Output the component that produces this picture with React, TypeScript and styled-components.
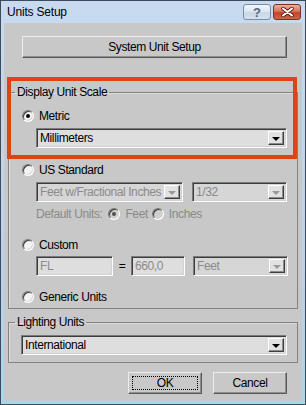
import React from "react";
import styled, { createGlobalStyle } from "styled-components";

const GlobalStyle = createGlobalStyle`
  body {
    margin: 0;
    background: #ffffff;
  }
`;

const uiFont = `"Liberation Sans", Arial, sans-serif`;

const Window = styled.div`
  width: 306px;
  height: 405px;
  box-sizing: border-box;
  border: 1px solid #3e4b5d;
  background: linear-gradient(to bottom, #c8daef 0%, #bcd1ea 60%, #a9d6e8 100%);
  padding: 0 3px 3px;
  display: flex;
  flex-direction: column;
  font-family: ${uiFont};
  font-size: 12px;
  letter-spacing: -0.4px;
  line-height: 14px;
  color: #000;
`;

const TitleBar = styled.div`
  height: 22px;
  flex: none;
  display: flex;
  align-items: center;
  justify-content: space-between;
  padding: 0 1px 0 3px;
`;

const TitleText = styled.span`
  font-size: 12px;
  letter-spacing: -0.2px;
  color: #000;
`;

const TitleButtons = styled.div`
  display: flex;
  gap: 2px;
`;

const CaptionButton = styled.div<{ $close?: boolean }>`
  width: 28px;
  height: 16px;
  box-sizing: border-box;
  border-radius: 3px;
  border: 1px solid ${(p) => (p.$close ? "#7c3322" : "#7a8ca3")};
  background: ${(p) =>
    p.$close
      ? "linear-gradient(to bottom, #eab0a0 0%, #d8735a 45%, #c4432a 55%, #d1644a 100%)"
      : "linear-gradient(to bottom, #f2f6fb 0%, #dde7f2 45%, #c9d7e8 55%, #d4e0ee 100%)"};
  display: flex;
  align-items: center;
  justify-content: center;
  font-weight: bold;
  font-size: 13px;
  letter-spacing: 0;
  color: #53667f;
  line-height: 1;
`;

const Client = styled.div`
  flex: 1;
  background: #c8c8c8;
  padding: 0 4px;
  display: flex;
  flex-direction: column;
`;

const PushButton = styled.div<{ $w: number; $focus?: boolean }>`
  width: ${(p) => p.$w}px;
  height: 22px;
  box-sizing: border-box;
  background: #c8c8c8;
  border: 1px solid;
  border-color: #ececec #5a5a5a #5a5a5a #ececec;
  box-shadow: inset -1px -1px 0 #8e8e8e;
  display: flex;
  align-items: center;
  justify-content: center;
  outline: ${(p) => (p.$focus ? "1px dotted #000" : "none")};
  outline-offset: -5px;
`;

const SystemRow = styled.div`
  margin-top: 13px;
  padding-left: 14px;
`;

const GroupWrap = styled.div<{ $mt: number }>`
  position: relative;
  margin-top: ${(p) => p.$mt}px;
`;

const Group = styled.fieldset<{ $pb: number }>`
  margin: 0;
  min-width: 0;
  padding: 0 0 ${(p) => p.$pb}px 0;
  border: 1px solid #828282;
  box-shadow: inset 1px 1px 0 #dcdcdc;
`;

const Legend = styled.legend`
  margin-left: 6px;
  padding: 0 2px;
  line-height: 14px;
`;

const Highlight = styled.div`
  position: absolute;
  top: -8px;
  left: -1px;
  width: 290px;
  height: 82px;
  box-sizing: border-box;
  border: 4px solid #dc4414;
  pointer-events: none;
`;

const Row = styled.div<{ $mt: number; $indent: number }>`
  display: flex;
  align-items: center;
  margin-top: ${(p) => p.$mt}px;
  padding-left: ${(p) => p.$indent}px;
  min-height: 14px;
`;

const Radio = styled.span<{ $checked?: boolean; $disabled?: boolean }>`
  width: 12px;
  height: 12px;
  flex: none;
  box-sizing: border-box;
  border-radius: 50%;
  border: 1px solid;
  border-color: #7a7a7a #ffffff #ffffff #7a7a7a;
  box-shadow: inset 1px 1px 0 #3c3c3c, inset -1px -1px 0 #d6d6d6;
  background: ${(p) => (p.$disabled ? "#cfcfcf" : "#f4f4f4")};
  display: flex;
  align-items: center;
  justify-content: center;

  &::after {
    content: "";
    display: ${(p) => (p.$checked ? "block" : "none")};
    width: 4px;
    height: 4px;
    border-radius: 50%;
    background: ${(p) => (p.$disabled ? "#505050" : "#000")};
  }
`;

const Label = styled.span<{ $ml: number; $disabled?: boolean }>`
  margin-left: ${(p) => p.$ml}px;
  color: ${(p) => (p.$disabled ? "#8a8a8a" : "#000")};
  white-space: nowrap;
  display: flex;
  align-items: center;
`;

const Combo = styled.div<{ $w: number; $disabled?: boolean; $ml?: number }>`
  width: ${(p) => p.$w}px;
  height: 20px;
  flex: none;
  margin-left: ${(p) => p.$ml ?? 0}px;
  box-sizing: border-box;
  display: flex;
  align-items: center;
  border: 1px solid;
  border-color: #7a7a7a #ffffff #ffffff #7a7a7a;
  box-shadow: inset 1px 1px 0 #3c3c3c, inset -1px -1px 0 #d2d2d2;
  background: ${(p) => (p.$disabled ? "#d6d6d6" : "#dedede")};
  color: ${(p) => (p.$disabled ? "#8a8a8a" : "#000")};
  padding: 0 2px 0 3px;
  white-space: nowrap;
  overflow: hidden;
`;

const ComboText = styled.span`
  flex: 1;
  min-width: 0;
  overflow: hidden;
`;

const ArrowBox = styled.span<{ $disabled?: boolean }>`
  width: 16px;
  height: 14px;
  flex: none;
  box-sizing: border-box;
  border: 1px solid;
  border-color: #ffffff #404040 #404040 #ffffff;
  box-shadow: inset -1px -1px 0 #8a8a8a;
  background: #e2e2e2;
  display: flex;
  align-items: center;
  justify-content: center;

  &::after {
    content: "";
    width: 0;
    height: 0;
    margin-top: 1px;
    border-left: 4px solid transparent;
    border-right: 4px solid transparent;
    border-top: 4px solid ${(p) => (p.$disabled ? "#9a9a9a" : "#000")};
  }
`;

const Field = styled.div<{ $w: number }>`
  width: ${(p) => p.$w}px;
  height: 20px;
  flex: none;
  box-sizing: border-box;
  display: flex;
  align-items: center;
  border: 1px solid;
  border-color: #7a7a7a #ffffff #ffffff #7a7a7a;
  box-shadow: inset 1px 1px 0 #3c3c3c, inset -1px -1px 0 #d2d2d2;
  background: #dedede;
  color: #8a8a8a;
  padding-left: 3px;
`;

const Equals = styled.span`
  width: 18px;
  text-align: center;
  color: #000;
`;

const ButtonRow = styled.div`
  display: flex;
  justify-content: flex-end;
  gap: 11px;
  margin-top: 9px;
  padding-right: 11px;
`;

function Dropdown(props: { w: number; text: string; disabled?: boolean; ml?: number }) {
  return (
    <Combo $w={props.w} $disabled={props.disabled} $ml={props.ml}>
      <ComboText>{props.text}</ComboText>
      <ArrowBox $disabled={props.disabled} />
    </Combo>
  );
}

function CloseGlyph() {
  return (
    <svg width="13" height="10" viewBox="0 0 13 10">
      <path d="M2 1.5 L11 8.5 M11 1.5 L2 8.5" stroke="#5a1c10" strokeWidth="3.6" strokeLinecap="round" />
      <path d="M2 1.5 L11 8.5 M11 1.5 L2 8.5" stroke="#ffffff" strokeWidth="2" strokeLinecap="round" />
    </svg>
  );
}

export default function App() {
  return (
    <>
      <GlobalStyle />
      <Window>
        <TitleBar>
          <TitleText>Units Setup</TitleText>
          <TitleButtons>
            <CaptionButton>?</CaptionButton>
            <CaptionButton $close>
              <CloseGlyph />
            </CaptionButton>
          </TitleButtons>
        </TitleBar>
        <Client>
          <SystemRow>
            <PushButton $w={265}>System Unit Setup</PushButton>
          </SystemRow>

          <GroupWrap $mt={27}>
            <Group $pb={4}>
              <Legend>Display Unit Scale</Legend>
              <Row $mt={10} $indent={13}>
                <Radio $checked />
                <Label $ml={5}>Metric</Label>
              </Row>
              <Row $mt={5} $indent={27}>
                <Dropdown w={251} text="Millimeters" />
              </Row>
              <Row $mt={15} $indent={13}>
                <Radio />
                <Label $ml={5}>US Standard</Label>
              </Row>
              <Row $mt={5} $indent={27}>
                <Dropdown w={147} text="Feet w/Fractional Inches" disabled />
                <Dropdown w={95} text="1/32" disabled ml={9} />
              </Row>
              <Row $mt={5} $indent={27}>
                <Label $ml={0} $disabled>Default Units:</Label>
                <Label $ml={6} $disabled>
                  <Radio $checked $disabled />
                </Label>
                <Label $ml={5} $disabled>Feet</Label>
                <Label $ml={4} $disabled>
                  <Radio $disabled />
                </Label>
                <Label $ml={5} $disabled>Inches</Label>
              </Row>
              <Row $mt={17} $indent={13}>
                <Radio />
                <Label $ml={5}>Custom</Label>
              </Row>
              <Row $mt={4} $indent={27}>
                <Field $w={77}>FL</Field>
                <Equals>=</Equals>
                <Field $w={54}>660,0</Field>
                <Dropdown w={95} text="Feet" disabled ml={8} />
              </Row>
              <Row $mt={14} $indent={13}>
                <Radio />
                <Label $ml={5}>Generic Units</Label>
              </Row>
            </Group>
            <Highlight />
          </GroupWrap>

          <GroupWrap $mt={6}>
            <Group $pb={7}>
              <Legend>Lighting Units</Legend>
              <Row $mt={6} $indent={12}>
                <Dropdown w={266} text="International" />
              </Row>
            </Group>
          </GroupWrap>

          <ButtonRow>
            <PushButton $w={74} $focus>OK</PushButton>
            <PushButton $w={74}>Cancel</PushButton>
          </ButtonRow>
        </Client>
      </Window>
    </>
  );
}
